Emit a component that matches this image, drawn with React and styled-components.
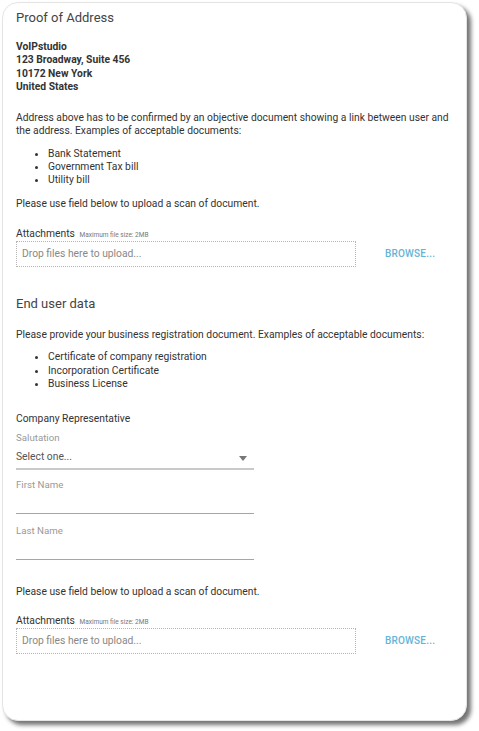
import React from "react";
import styled, { createGlobalStyle } from "styled-components";

const Global = createGlobalStyle`
  html, body { margin: 0; padding: 0; background: #fff; }
  body { font-family: Roboto, "Liberation Sans", Arial, sans-serif; color: #333; }
  * { box-sizing: border-box; }
`;

const Page = styled.div`
  width: 479px;
  height: 731px;
  padding: 2px 0 0 2px;
`;

const Card = styled.div`
  width: 465px;
  height: 719px;
  background: #fff;
  border: 1px solid #e4e4e4;
  border-radius: 16px;
  box-shadow: 4px 4px 4px rgba(0, 0, 0, 0.55);
  padding: 7px 14px 0 13px;
  display: flex;
  flex-direction: column;
`;

const Title = styled.h2`
  margin: ${(p) => p.$top || 0}px 0 0;
  font-size: 13px;
  line-height: 16px;
  font-weight: 400;
  color: #444;
`;

const Text = styled.p`
  margin: ${(p) => p.$top || 0}px 0 0;
  max-width: 434px;
  font-size: 10.3px;
  line-height: 13.3px;
  color: ${(p) => p.$color || "#333"};
  font-weight: ${(p) => (p.$bold ? 700 : 400)};
`;

const List = styled.ul`
  margin: ${(p) => p.$top || 0}px 0 0;
  padding-left: 32px;
  font-size: 10.3px;
  line-height: 13.3px;
  color: #333;
`;

const AttachLabel = styled.div`
  margin-top: ${(p) => p.$top || 0}px;
  height: 14px;
  font-size: 10.3px;
  line-height: 13.3px;
  color: #333;
`;

const Small = styled.span`
  font-size: 6.5px;
  color: #777;
  margin-left: 2px;
`;

const UploadRow = styled.div`
  display: flex;
  align-items: center;
  gap: 29px;
`;

const Drop = styled.div`
  width: 340px;
  height: 26px;
  border: 1px dotted #b5b5b5;
  padding-left: 5px;
  display: flex;
  align-items: center;
  font-size: 10.3px;
  color: #888;
`;

const Browse = styled.button`
  border: none;
  background: none;
  padding: 0;
  font-family: inherit;
  font-size: 10px;
  font-weight: 500;
  color: #64b4d6;
  letter-spacing: 0.2px;
`;

const FieldLabel = styled.div`
  margin-top: ${(p) => p.$top || 0}px;
  font-size: 9.7px;
  line-height: 12px;
  color: #999;
`;

const Field = styled.div`
  width: 238px;
  height: ${(p) => (p.$select ? 26 : 23)}px;
  border-bottom: ${(p) => (p.$select ? "2px solid #c9c9c9" : "1px solid #a5a5a5")};
  display: flex;
  align-items: center;
  justify-content: space-between;
  padding: 0 7px 0 0;
  font-size: 10.3px;
  color: #555;
`;

const Arrow = styled.span`
  width: 0;
  height: 0;
  border-left: 4.5px solid transparent;
  border-right: 4.5px solid transparent;
  border-top: 5px solid #777;
  margin-top: 4px;
`;

function Upload({ top }) {
  return (
    <>
      <AttachLabel $top={top}>
        Attachments <Small>Maximum file size: 2MB</Small>
      </AttachLabel>
      <UploadRow>
        <Drop>Drop files here to upload...</Drop>
        <Browse>BROWSE...</Browse>
      </UploadRow>
    </>
  );
}

export default function App() {
  return (
    <Page>
      <Global />
      <Card>
        <Title>Proof of Address</Title>
        <Text $top={14} $bold>
          VoIPstudio
          <br />
          123 Broadway, Suite 456
          <br />
          10172 New York
          <br />
          United States
        </Text>
        <Text $top={18}>
          Address above has to be confirmed by an objective document showing a link between user and the
          address. Examples of acceptable documents:
        </Text>
        <List $top={9}>
          <li>Bank Statement</li>
          <li>Government Tax bill</li>
          <li>Utility bill</li>
        </List>
        <Text $top={10}>Please use field below to upload a scan of document.</Text>
        <Upload top={17} />

        <Title $top={29}>End user data</Title>
        <Text $top={16}>
          Please provide your business registration document. Examples of acceptable documents:
        </Text>
        <List $top={9}>
          <li>Certificate of company registration</li>
          <li>Incorporation Certificate</li>
          <li>Business License</li>
        </List>
        <Text $top={22}>Company Representative</Text>
        <FieldLabel $top={7}>Salutation</FieldLabel>
        <Field $select>
          <span>Select one...</span>
          <Arrow />
        </Field>
        <FieldLabel $top={9}>First Name</FieldLabel>
        <Field />
        <FieldLabel $top={11}>Last Name</FieldLabel>
        <Field />
        <Text $top={25}>Please use field below to upload a scan of document.</Text>
        <Upload top={15} />
      </Card>
    </Page>
  );
}
